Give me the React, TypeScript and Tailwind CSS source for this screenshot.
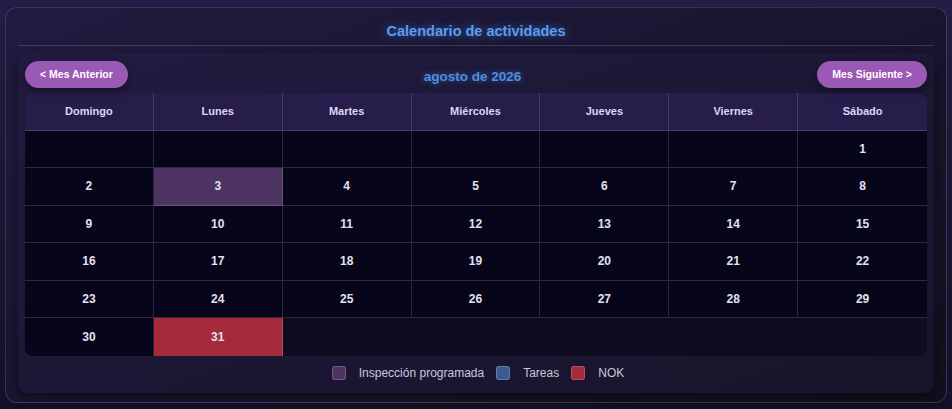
import React from 'react';

const DAYS = ['Domingo', 'Lunes', 'Martes', 'Miércoles', 'Jueves', 'Viernes', 'Sábado'];

// agosto 2026 starts on Saturday
const FIRST_OFFSET = 6;
const DAYS_IN_MONTH = 31;

const highlights: Record<number, string> = {
  3: 'bg-[#4e3462]',
  31: 'bg-[#a52a3a]',
};

function buildWeeks() {
  const cells: (number | null)[] = [];
  for (let i = 0; i < FIRST_OFFSET; i++) cells.push(null);
  for (let d = 1; d <= DAYS_IN_MONTH; d++) cells.push(d);
  const weeks: (number | null)[][] = [];
  for (let i = 0; i < cells.length; i += 7) weeks.push(cells.slice(i, i + 7));
  return weeks;
}

function LegendItem({ color, label }: { color: string; label: string }) {
  return (
    <div className="flex items-center gap-[13px]">
      <span className={`w-[14px] h-[14px] rounded-[3px] border border-white/20 ${color}`} />
      <span className="text-[12px] text-[#c9c6dc]">{label}</span>
    </div>
  );
}

export default function App() {
  const weeks = buildWeeks();
  return (
    <div
      className="w-full h-[409px] px-[5px] pt-[7px] bg-gradient-to-b from-[#241d48] to-[#15112a] overflow-hidden"
      style={{ fontFamily: '"Liberation Sans", Arial, sans-serif' }}
    >
      <div className="h-[396px] rounded-[12px] border border-white/15 bg-gradient-to-br from-[#211b40] to-[#120f1e] px-3 shadow-lg">
        <h2 className="pt-[15px] pb-[5px] leading-[17px] text-center text-[14.5px] font-bold text-[#5a9cf2] border-b border-white/15 [text-shadow:0_0_8px_rgba(80,150,240,0.6)]">
          Calendario de actividades
        </h2>

        <div className="mt-[7px] h-[340px] rounded-[10px] bg-gradient-to-br from-[#211b40] to-[#17142a] px-[7px] pt-[8px] shadow-[0_4px_12px_rgba(0,0,0,0.4)]">
          <div className="flex items-center justify-between h-[27px]">
            <button className="h-[27px] px-[15px] rounded-full bg-[#9b59b6] text-white text-[10.5px] font-bold shadow-[0_3px_8px_rgba(0,0,0,0.35)]">
              &lt; Mes Anterior
            </button>
            <div className="pt-[5px] text-[13.5px] font-bold text-[#4a90e2] [text-shadow:0_0_6px_rgba(74,144,226,0.5)]">
              agosto de 2026
            </div>
            <button className="h-[27px] px-[15px] rounded-full bg-[#9b59b6] text-white text-[10.5px] font-bold shadow-[0_3px_8px_rgba(0,0,0,0.35)]">
              Mes Siguiente &gt;
            </button>
          </div>

          <div className="mt-[5px] rounded-[8px] bg-[#0f0c1f] overflow-hidden">
            <div className="grid grid-cols-7 h-[37.5px] bg-[#261d4b] border-b border-white/15">
              {DAYS.map((d, i) => (
                <div
                  key={d}
                  className={`flex items-center justify-center text-[11px] font-bold text-[#dcd6f5] ${i < 6 ? 'border-r border-white/15' : ''}`}
                >
                  {d}
                </div>
              ))}
            </div>
            {weeks.map((week, wi) => (
              <div key={wi} className="grid grid-cols-7 h-[37.5px]">
                {week.map((day, di) => (
                  <div
                    key={di}
                    className={`flex items-center justify-center text-[12px] font-bold text-[#e2e0f2] border-white/15 ${
                      day ? highlights[day] ?? 'bg-[#07051a]' : 'bg-[#07051a]'
                    } ${di < 6 ? 'border-r' : ''} ${wi < weeks.length - 1 ? 'border-b' : ''}`}
                  >
                    {day ?? ''}
                  </div>
                ))}
              </div>
            ))}
          </div>

          <div className="flex items-center justify-center gap-3 pt-[8px] pl-[4px]">
            <LegendItem color="bg-[#4e3462]" label="Inspección programada" />
            <LegendItem color="bg-[#3d5a94]" label="Tareas" />
            <LegendItem color="bg-[#a52a3a]" label="NOK" />
          </div>
        </div>
      </div>
    </div>
  );
}
